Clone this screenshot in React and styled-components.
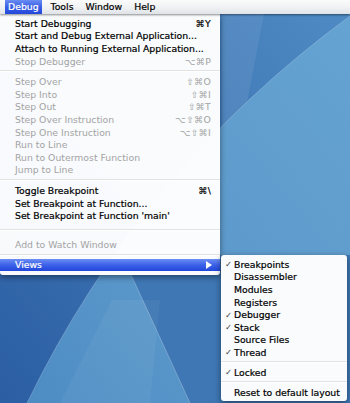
import React from "react";
import styled, { createGlobalStyle } from "styled-components";

const GlobalStyle = createGlobalStyle`
  html, body { margin: 0; padding: 0; background: #3467a8; }
  body { font-family: "DejaVu Sans", "Liberation Sans", sans-serif; }
`;

const Desktop = styled.div`
  position: relative;
  width: 350px;
  height: 403px;
  overflow: hidden;
  font-size: 9.3px;
`;

const Wallpaper = styled.svg`
  position: absolute;
  left: 0;
  top: 0;
  z-index: 0;
`;

const MenuBar = styled.div`
  position: relative;
  z-index: 2;
  height: 14px;
  display: flex;
  align-items: center;
  gap: 6px;
  padding-left: 5px;
  background: linear-gradient(#fbfbfb, #eef0f2 60%, #dfe3e8);
  box-shadow: 0 1px 2px rgba(0, 0, 0, 0.45);
`;

const MenuTitle = styled.div`
  height: 14px;
  line-height: 14px;
  padding: 0 3px;
  color: ${(p) => (p.$active ? "#fff" : "#000")};
  -webkit-text-stroke: ${(p) => (p.$active ? "0.2px #fff" : "0.2px #000")};
  background: ${(p) =>
    p.$active ? "linear-gradient(#6a8cf2, #3a5fe6 50%, #2347da)" : "none"};
`;

const MenuArea = styled.div`
  position: relative;
  z-index: 1;
  display: flex;
  align-items: flex-start;
`;

const Menu = styled.div`
  width: 220px;
  padding: 3px 0 4px;
  background: rgba(255, 255, 255, 0.97);
  border-radius: 0 0 3px 3px;
  box-shadow: 0 2px 6px rgba(0, 0, 0, 0.45);
`;

const SubMenu = styled.div`
  width: 126px;
  margin: 241px 0 0 1px;
  padding: 3px 0 2px;
  background: rgba(255, 255, 255, 0.97);
  border-radius: 3px;
  box-shadow: 0 2px 6px rgba(0, 0, 0, 0.45);
`;

const Item = styled.div`
  display: flex;
  align-items: center;
  justify-content: space-between;
  height: 12.6px;
  padding: 0 9px 0 15px;
  color: ${(p) => (p.$active ? "#fff" : p.$disabled ? "#a3a3a3" : "#000")};
  -webkit-text-stroke: ${(p) =>
    p.$disabled ? "0" : p.$active ? "0.2px #fff" : "0.2px #000"};
  background: ${(p) =>
    p.$active ? "linear-gradient(#6b8ef4, #3c61e8 50%, #2146dc)" : "none"};
  white-space: nowrap;
`;

const SubItem = styled.div`
  display: flex;
  align-items: center;
  height: 12.6px;
  padding-left: 4px;
  color: #000;
  -webkit-text-stroke: 0.2px #000;
  white-space: nowrap;
`;

const Check = styled.span`
  width: 9px;
  flex: none;
  color: #4a4a4a;
  -webkit-text-stroke: 0;
  font-size: 8.5px;
`;

const Shortcut = styled.span`
  letter-spacing: 0.2px;
`;

const Arrow = styled.span`
  width: 0;
  height: 0;
  border-top: 4px solid transparent;
  border-bottom: 4px solid transparent;
  border-left: 6px solid #fff;
  margin-right: -1px;
`;

const Separator = styled.div`
  height: ${(p) => p.$h || 8}px;
  display: flex;
  align-items: center;
  &::after {
    content: "";
    flex: 1;
    height: 1px;
    background: #e2e2e2;
    border-bottom: 1px solid #fff;
  }
`;

const mainItems = [
  { label: "Start Debugging", key: "⌘Y" },
  { label: "Start and Debug External Application..." },
  { label: "Attach to Running External Application..." },
  { label: "Stop Debugger", key: "⌥⌘P", disabled: true },
  "sep",
  { label: "Step Over", key: "⇧⌘O", disabled: true },
  { label: "Step Into", key: "⇧⌘I", disabled: true },
  { label: "Step Out", key: "⇧⌘T", disabled: true },
  { label: "Step Over Instruction", key: "⌥⇧⌘O", disabled: true },
  { label: "Step One Instruction", key: "⌥⇧⌘I", disabled: true },
  { label: "Run to Line", disabled: true },
  { label: "Run to Outermost Function", disabled: true },
  { label: "Jump to Line", disabled: true },
  "sep",
  { label: "Toggle Breakpoint", key: "⌘\\" },
  { label: "Set Breakpoint at Function..." },
  { label: "Set Breakpoint at Function 'main'" },
  "sep2",
  { label: "Add to Watch Window", disabled: true },
  "sep",
  { label: "Views", active: true, arrow: true },
];

const viewItems = [
  { label: "Breakpoints", checked: true },
  { label: "Disassembler" },
  { label: "Modules" },
  { label: "Registers" },
  { label: "Debugger", checked: true },
  { label: "Stack", checked: true },
  { label: "Source Files" },
  { label: "Thread", checked: true },
  "sep",
  { label: "Locked", checked: true },
  "sep",
  { label: "Reset to default layout" },
];

function DesktopPicture() {
  return (
    <Wallpaper width="350" height="403" viewBox="0 0 350 403">
      <defs>
        <linearGradient id="base" x1="1" y1="0" x2="0" y2="1">
          <stop offset="0" stopColor="#4f8bc4" />
          <stop offset="1" stopColor="#2b5ea3" />
        </linearGradient>
        <linearGradient id="light" x1="1" y1="0" x2="0" y2="1">
          <stop offset="0" stopColor="#65a3d2" />
          <stop offset="0.6" stopColor="#5c99cb" />
          <stop offset="1" stopColor="#4d8cc4" />
        </linearGradient>
      </defs>
      <rect width="350" height="403" fill="url(#base)" />
      <path d="M240 14 L264 14 L244 118 L222 132 L222 14 Z" fill="rgba(255,255,255,0.07)" />
      <path d="M27 403 Q 140 170 350 16 L350 403 Z" fill="url(#light)" />
      <path d="M122 255 L190 403 L350 403 L350 255 Z" fill="#3e77b4" />
      <path d="M122 255 L190 403" stroke="rgba(255,255,255,0.3)" strokeWidth="0.8" />
      <path d="M27 403 Q 140 170 350 16" stroke="rgba(255,255,255,0.25)" strokeWidth="0.8" fill="none" />
      <path d="M60 403 L112 300 L160 300 L150 403 Z" fill="rgba(255,255,255,0.05)" />
    </Wallpaper>
  );
}

export default function App() {
  return (
    <Desktop>
      <GlobalStyle />
      <DesktopPicture />
      <MenuBar>
        <MenuTitle $active>Debug</MenuTitle>
        <MenuTitle>Tools</MenuTitle>
        <MenuTitle>Window</MenuTitle>
        <MenuTitle>Help</MenuTitle>
      </MenuBar>
      <MenuArea>
        <Menu>
          {mainItems.map((it, i) =>
            it === "sep" ? (
              <Separator key={i} />
            ) : it === "sep2" ? (
              <Separator key={i} $h={16} />
            ) : (
              <Item key={i} $disabled={it.disabled} $active={it.active}>
                <span>{it.label}</span>
                {it.key && <Shortcut>{it.key}</Shortcut>}
                {it.arrow && <Arrow />}
              </Item>
            )
          )}
        </Menu>
        <SubMenu>
          {viewItems.map((it, i) =>
            it === "sep" ? (
              <Separator key={i} $h={7.4} />
            ) : (
              <SubItem key={i}>
                <Check>{it.checked ? "✓" : ""}</Check>
                <span>{it.label}</span>
              </SubItem>
            )
          )}
        </SubMenu>
      </MenuArea>
    </Desktop>
  );
}
